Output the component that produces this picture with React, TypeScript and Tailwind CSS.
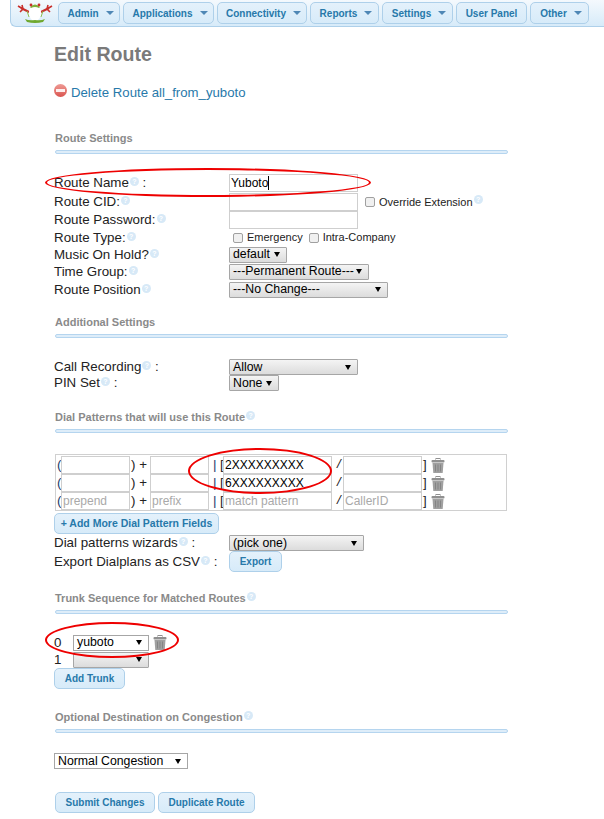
import React from 'react';

const Caret = () => (
  <span className="ml-[7px] inline-block w-0 h-0 border-x-[4px] border-x-transparent border-t-[4px] border-t-[#4f87b5]" />
);

const NavButton = ({ label, width, caret = true }: { label: string; width: string; caret?: boolean }) => (
  <div className={`${width} h-[22px] flex items-center justify-center rounded-[5px] border border-[#aed0ea] bg-gradient-to-b from-[#e4f1fb] to-[#d7ebf9] text-[10px] font-bold text-[#2779aa] ${caret ? 'pl-[3px]' : ''}`}>
    {label}
    {caret && <Caret />}
  </div>
);

const Help = () => (
  <span className="inline-flex w-[9px] h-[9px] ml-[1px] -translate-y-[3px] items-center justify-center rounded-full bg-[#d7e9f7] text-[7px] font-bold leading-none text-white">?</span>
);

const Section = ({ title, help, className }: { title: string; help?: boolean; className: string }) => (
  <div className={className}>
    <div className="h-[16px] pl-[1px] text-[11px] leading-[16px] font-bold text-[#8a8a8a]">
      {title}
      {help && <Help />}
    </div>
    <div className="mt-[4px] ml-[1px] w-[453px] h-[4px] rounded-[2px] border border-[#b5d5ef] bg-[#deedf9]" />
  </div>
);

const Select = ({ label, width, plain }: { label: string; width: string; plain?: boolean }) => (
  <div className={`${width} h-[16px] flex items-center justify-between pl-[3px] pr-[6px] border border-[#a6a6a6] text-[12.3px] leading-none text-black ${plain ? 'bg-white' : 'rounded-[1px] bg-gradient-to-b from-[#f4f4f4] to-[#dcdcdc]'}`}>
    <span className="whitespace-nowrap">{label}</span>
    <span className="w-0 h-0 border-x-[3px] border-x-transparent border-t-[5px] border-t-black" />
  </div>
);

const TextInput = ({ value, placeholder, width, cursor }: { value?: string; placeholder?: string; width: string; cursor?: boolean }) => (
  <div className={`${width} h-[18px] shrink-0 flex items-center pl-[1px] border border-[#cfcfcf] bg-white text-[12px] leading-none text-black`}>
    {value}
    {placeholder && <span className="text-[#a9a9a9]">{placeholder}</span>}
    {cursor && <span className="w-px h-[14px] bg-black" />}
  </div>
);

const Row = ({ label, height, children }: { label: React.ReactNode; height: string; children: React.ReactNode }) => (
  <div className={`${height} flex items-center text-[13.33px] text-[#222]`}>
    <div className="w-[175px] shrink-0 whitespace-nowrap">{label}</div>
    {children}
  </div>
);

const Check = ({ label }: { label: string }) => (
  <span className="flex items-center text-[11px] text-[#222]">
    <span className="mr-[4px] w-[10px] h-[10px] rounded-[2px] border border-[#a0a0a0] bg-[#f0f0f0]" />
    {label}
  </span>
);

const Trash = () => (
  <svg width="14" height="15" viewBox="0 0 14 15" className="shrink-0">
    <rect x="5" y="0.5" width="4" height="2" fill="none" stroke="#909090" />
    <rect x="0.5" y="2" width="13" height="2.5" rx="1" fill="#909090" />
    <path d="M1.5 5h11l-.8 10H2.3z" fill="#a0a0a0" />
    <path d="M4.5 6.5v7M7 6.5v7M9.5 6.5v7" stroke="#848484" strokeWidth="1" />
  </svg>
);

const Blue = ({ label, width, className = '', text = 'text-[10px]' }: { label: string; width: string; className?: string; text?: string }) => (
  <div className={`${width} h-[21px] flex items-center justify-center rounded-[5px] border border-[#aed0ea] bg-gradient-to-b from-[#e4f1fb] to-[#d7ebf9] ${text} font-bold text-[#2779aa] ${className}`}>
    {label}
  </div>
);

const DialRow = ({ a, b, c, d, ph }: { a?: string; b?: string; c?: string; d?: string; ph?: boolean }) => (
  <div className="h-[18px] flex items-center text-[13.33px] text-[#222]">
    <span className="w-[4px] text-[#1a3a6a]">(</span>
    <TextInput width="w-[69px]" placeholder={ph ? a : undefined} />
    <span className="w-[20px] pl-[1px] whitespace-nowrap">) +</span>
    <TextInput width="w-[59px]" placeholder={ph ? b : undefined} />
    <span className="w-[11px] pl-[4px] text-[#1a3a6a]">|</span>
    <span className="w-[3px]">[</span>
    <TextInput width="w-[109px]" value={ph ? undefined : c} placeholder={ph ? c : undefined} />
    <span className="w-[11px] pl-[5px] italic -translate-y-[1px]">/</span>
    <TextInput width="w-[79px]" placeholder={ph ? d : undefined} />
    <span className="w-[9px] pl-[1px]">]</span>
    <Trash />
  </div>
);

const Ellipse = ({ className }: { className: string }) => (
  <div className={`absolute rounded-[50%] border-[2px] border-[#ee0000] ${className}`} />
);

export default function App() {
  return (
    <div className="relative w-[604px] h-[819px] overflow-hidden bg-white font-['Liberation_Sans',Arial,sans-serif]">
      {/* Top nav */}
      <div className="ml-[10px] h-[27px] pt-[2px] pl-[47px] flex gap-[3px] rounded-bl-[6px] border-l border-b border-[#aed0ea] bg-gradient-to-b from-[#f4f9fd] to-[#d7ebf9]">
        <svg width="40" height="26" viewBox="0 0 40 26" className="absolute left-[15px] top-0">
          <path d="M6 8l8 4M34 8l-8 4" stroke="#c9302c" strokeWidth="2" />
          <path d="M3 6l5 3M5 12l3-3M7 5l1 4M37 6l-5 3M35 12l-3-3M33 5l-1 4" stroke="#c9302c" strokeWidth="1.6" />
          <ellipse cx="20" cy="13" rx="6" ry="8" fill="#fff" />
          <path d="M15 7q5-5 10 0l-1 1q-4-2-8 0z" fill="#7fb23a" />
          <circle cx="16" cy="5" r="1.4" fill="#c9302c" />
          <circle cx="24" cy="5" r="1.4" fill="#c9302c" />
          <path d="M12 11l2 6M28 11l-2 6" stroke="#8fbf4f" strokeWidth="1" />
          <path d="M10 19q4 2 10 1q6 1 10-1l-2 3q-8 2-16 0z" fill="#6fa82f" />
        </svg>
        <NavButton label="Admin" width="w-[62px]" />
        <NavButton label="Applications" width="w-[91px]" />
        <NavButton label="Connectivity" width="w-[90px]" />
        <NavButton label="Reports" width="w-[69px]" />
        <NavButton label="Settings" width="w-[71px]" />
        <NavButton label="User Panel" width="w-[71px]" caret={false} />
        <NavButton label="Other" width="w-[59px]" />
      </div>

      <div className="pl-[54px]">
        <h1 className="mt-[15px] h-[24px] text-[19.6px] leading-[24px] font-bold text-[#7a7a7a]">Edit Route</h1>

        <div className="mt-[18px] h-[18px] flex items-center text-[13.2px] text-[#2779aa]">
          <span className="relative mr-[4px] -translate-y-[3px] w-[13px] h-[13px] rounded-full bg-gradient-to-b from-[#ee9a95] to-[#d9534f] flex items-center justify-center">
            <span className="w-[9px] h-[3px] bg-[#fdeeee]" />
          </span>
          Delete Route all_from_yuboto
        </div>

        <Section title="Route Settings" className="mt-[28px]" />

        <div className="mt-[18px]">
          <Row height="h-[21px]" label={<>Route Name<Help /> :</>}>
            <TextInput width="w-[129px]" value="Yuboto" cursor />
          </Row>
          <Row height="h-[18px]" label={<>Route CID:<Help /></>}>
            <TextInput width="w-[129px]" />
            <span className="ml-[7px]"><Check label="Override Extension" /></span>
            <Help />
          </Row>
          <Row height="h-[18px]" label={<>Route Password:<Help /></>}>
            <TextInput width="w-[129px]" />
          </Row>
          <Row height="h-[17px]" label={<>Route Type:<Help /></>}>
            <span className="ml-[4px] flex gap-[6px]">
              <Check label="Emergency" />
              <Check label="Intra-Company" />
            </span>
          </Row>
          <Row height="h-[17px]" label={<>Music On Hold?<Help /></>}>
            <Select label="default" width="w-[58px]" />
          </Row>
          <Row height="h-[17px]" label={<>Time Group:<Help /></>}>
            <Select label="---Permanent Route---" width="w-[140px]" />
          </Row>
          <Row height="h-[19px]" label={<>Route Position<Help /></>}>
            <Select label="---No Change---" width="w-[159px]" />
          </Row>
        </div>

        <Section title="Additional Settings" className="mt-[15px]" />

        <div className="mt-[21px]">
          <Row height="h-[16px]" label={<>Call Recording<Help /> :</>}>
            <Select label="Allow" width="w-[129px]" />
          </Row>
          <Row height="h-[16px]" label={<>PIN Set<Help /> :</>}>
            <Select label="None" width="w-[50px]" />
          </Row>
        </div>

        <Section title="Dial Patterns that will use this Route" help className="mt-[18px]" />

        <div className="mt-[21px] ml-[1px] w-[452px] h-[57px] pl-[1px] pt-[1px] border border-[#d0d0d0]">
          <DialRow c="2XXXXXXXXX" />
          <DialRow c="6XXXXXXXXX" />
          <DialRow ph a="prepend" b="prefix" c="match pattern" d="CallerID" />
        </div>

        <Blue label="+ Add More Dial Pattern Fields" width="w-[165px]" text="text-[10.5px]" className="mt-[2px]" />

        <Row height="h-[18px]" label={<>Dial patterns wizards<Help /> :</>}>
          <Select label="(pick one)" width="w-[135px]" />
        </Row>
        <Row height="h-[19px]" label={<>Export Dialplans as CSV<Help /> :</>}>
          <Blue label="Export" width="w-[53px]" />
        </Row>

        <Section title="Trunk Sequence for Matched Routes" help className="mt-[19px]" />

        <div className="mt-[20px] text-[13.33px] text-[#222]">
          <div className="h-[17px] flex items-center">
            <span className="w-[19px]">0</span>
            <Select label="yuboto" width="w-[76px]" plain />
            <span className="ml-[4px]"><Trash /></span>
          </div>
          <div className="h-[17px] flex items-center">
            <span className="w-[19px]">1</span>
            <Select label="" width="w-[76px]" />
          </div>
        </div>

        <Blue label="Add Trunk" width="w-[71px]" />

        <Section title="Optional Destination on Congestion" help className="mt-[20px]" />

        <div className="mt-[20px]">
          <Select label="Normal Congestion" width="w-[134px]" plain />
        </div>

        <div className="mt-[23px] flex gap-[3px] ml-[1px]">
          <Blue label="Submit Changes" width="w-[100px]" />
          <Blue label="Duplicate Route" width="w-[97px]" />
        </div>
      </div>

      {/* Red hand-drawn marks */}
      <Ellipse className="left-[45px] top-[168px] w-[326px] h-[29px]" />
      <Ellipse className="left-[188px] top-[448px] w-[144px] h-[46px]" />
      <Ellipse className="left-[45px] top-[622px] w-[134px] h-[36px]" />
    </div>
  );
}
